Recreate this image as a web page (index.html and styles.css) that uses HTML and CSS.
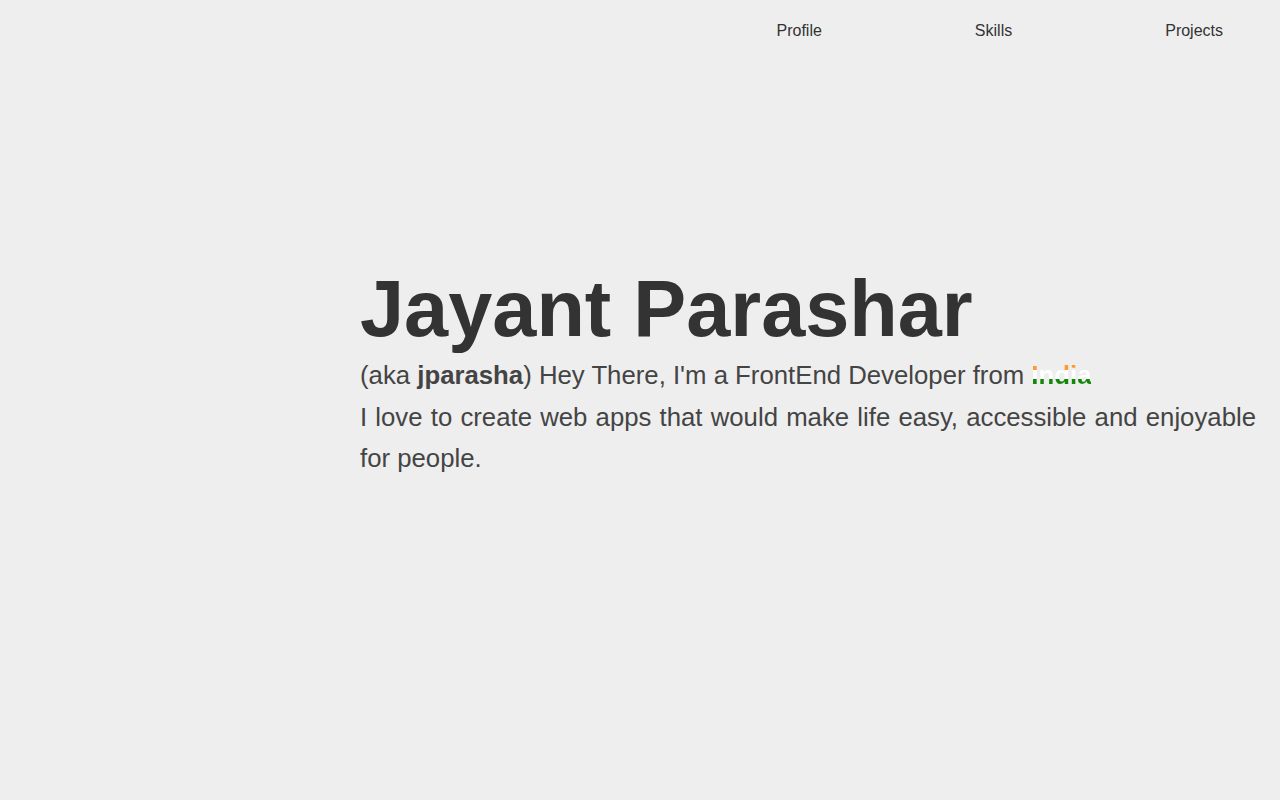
FILE: index.html
```html
<!DOCTYPE html>
<html lang="en">
<head>
<meta charset="utf-8">
<title>Jayant Parashar</title>
<link rel="stylesheet" href="styles.css">
</head>
<body>
<nav class="nav">
  <a class="nav-link" href="#profile">Profile</a>
  <a class="nav-link" href="#skills">Skills</a>
  <a class="nav-link" href="#projects">Projects</a>
</nav>
<main class="hero">
  <h1 class="name">Jayant Parashar</h1>
  <p class="intro">(aka <strong>jparasha</strong>) Hey There, I'm a FrontEnd Developer from <span class="india">India</span></p>
  <p class="about">I love to create web apps that would make life easy, accessible and enjoyable for people.</p>
</main>
</body>
</html>
```

FILE: styles.css
```css
html, body {
  margin: 0;
  padding: 0;
  background: #eeeeee;
  color: #333333;
  font-family: "Liberation Sans", Arial, sans-serif;
}
.nav {
  display: flex;
  justify-content: flex-end;
  gap: 153px;
  padding: 22px 57px 0 0;
  height: 38px;
}
.nav-link {
  font-size: 16px;
  line-height: 18px;
  color: #333333;
  text-decoration: none;
}
.hero {
  padding: 203px 24px 0 360px;
}
.name {
  margin: 0;
  font-size: 79.3px;
  font-weight: bold;
  line-height: 92px;
  color: #333333;
}
.intro {
  margin: 0;
  font-size: 25.75px;
  line-height: 40px;
  color: #444444;
}
.intro strong {
  font-weight: bold;
}
.india {
  font-weight: bold;
  background: linear-gradient(to bottom, #ff9933 0%, #ff9933 33%, #ffffff 33%, #ffffff 66%, #138808 66%, #138808 100%);
  -webkit-background-clip: text;
  background-clip: text;
  color: transparent;
}
.about {
  margin: 2px 0 0;
  font-size: 25.75px;
  line-height: 41px;
  text-align: justify;
  color: #444444;
}
```
